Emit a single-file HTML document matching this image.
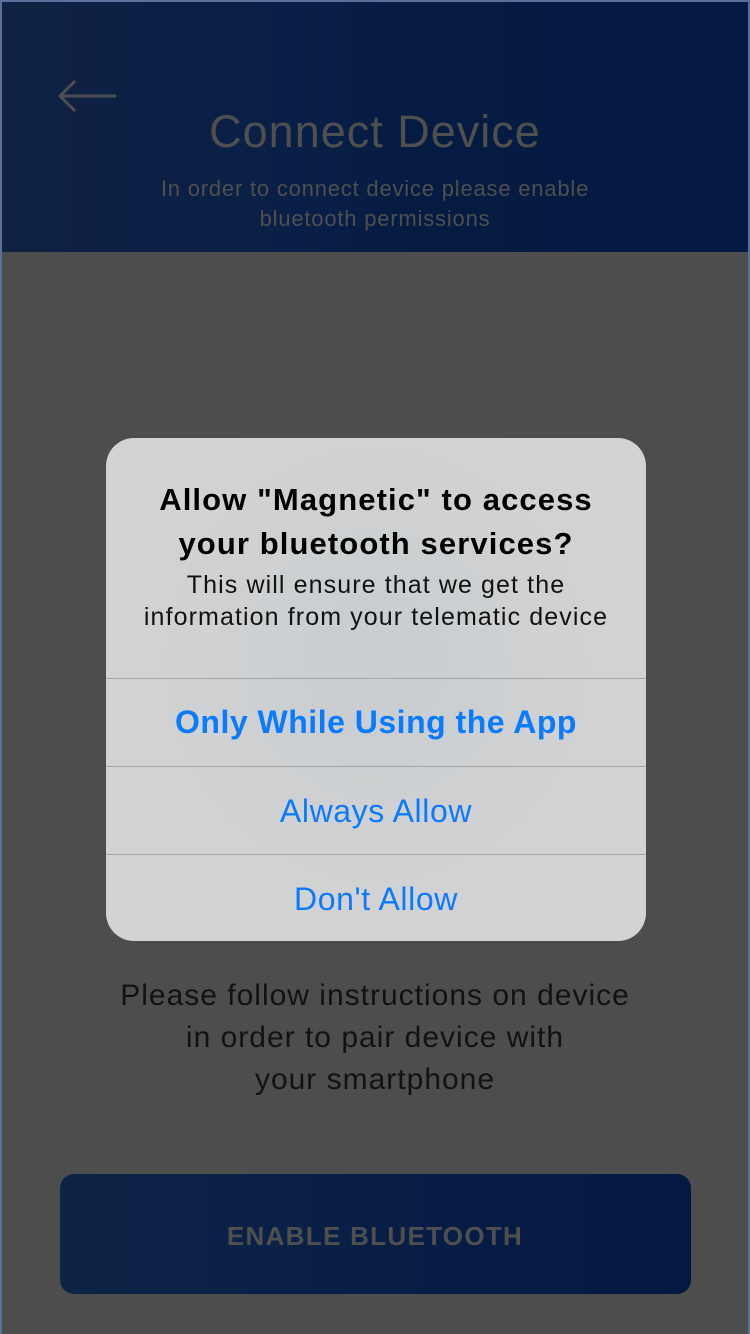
<!DOCTYPE html>
<html><head><meta charset="utf-8"><style>
*{margin:0;padding:0;box-sizing:border-box}
body{width:750px;height:1334px;background:#4d4d4d;font-family:"Liberation Sans",sans-serif;position:relative;overflow:hidden}
.frame{position:absolute;left:0;top:0;width:750px;height:1334px;border:2px solid #5a6f99;border-bottom:none}
.hdr{position:absolute;left:2px;top:2px;width:746px;height:250px;background:linear-gradient(90deg,#0f2244,#0a1f47 40%,#061b42 55%,#041a43)}
.t{position:absolute;left:0;width:750px;text-align:center;color:#4f4f4f}
.dlg{position:absolute;left:106px;top:438px;width:540px;height:503px;border-radius:28px;background:radial-gradient(ellipse at 50% 45%,#c8cdd0,#d3d3d3 70%);overflow:hidden}
.d{position:absolute;left:0;width:540px;text-align:center}
.ln{position:absolute;left:0;width:540px;height:1px;background:#a3a5a7}
.btn{position:absolute;left:60px;top:1174px;width:631px;height:120px;border-radius:14px;background:linear-gradient(90deg,#0e2446,#071d45 60%,#041942)}
</style></head><body>
<div class="hdr"></div>
<div class="frame"></div>
<svg style="position:absolute;left:58px;top:78px" width="60" height="36" viewBox="0 0 60 36"><path d="M2 18H58M17 3L2 18L17 33" fill="none" stroke="#4f4f4f" stroke-width="3"/></svg>
<div class="t" style="top:106px;font-size:45px;letter-spacing:1px">Connect Device</div>
<div class="t" style="top:174px;font-size:22px;line-height:30px;letter-spacing:0.8px">In order to connect device please enable<br>bluetooth permissions</div>
<div class="dlg">
<div class="d" style="top:40px;font-size:31px;font-weight:bold;line-height:44px;color:#000;letter-spacing:1.1px">Allow "Magnetic" to access<br>your bluetooth services?</div>
<div class="d" style="top:131px;font-size:25px;line-height:32px;color:#111;letter-spacing:1.1px">This will ensure that we get the<br>information from your telematic device</div>
<div class="ln" style="top:240px"></div>
<div class="d" style="top:266px;font-size:32px;font-weight:bold;color:#0a7aff;letter-spacing:0.5px">Only While Using the App</div>
<div class="ln" style="top:328px"></div>
<div class="d" style="top:355px;font-size:32px;color:#0a7aff;letter-spacing:0.6px">Always Allow</div>
<div class="ln" style="top:416px"></div>
<div class="d" style="top:443px;font-size:32px;color:#0a7aff;letter-spacing:0.6px">Don't Allow</div>
</div>
<div class="t" style="top:975px;font-size:30px;line-height:42px;color:#121212;letter-spacing:1px">Please follow instructions on device<br>in order to pair device with<br>your smartphone</div>
<div class="btn"></div>
<div class="t" style="top:1221px;font-size:26px;font-weight:bold;letter-spacing:1.3px;color:#4f4f4f">ENABLE BLUETOOTH</div>
</body></html>
